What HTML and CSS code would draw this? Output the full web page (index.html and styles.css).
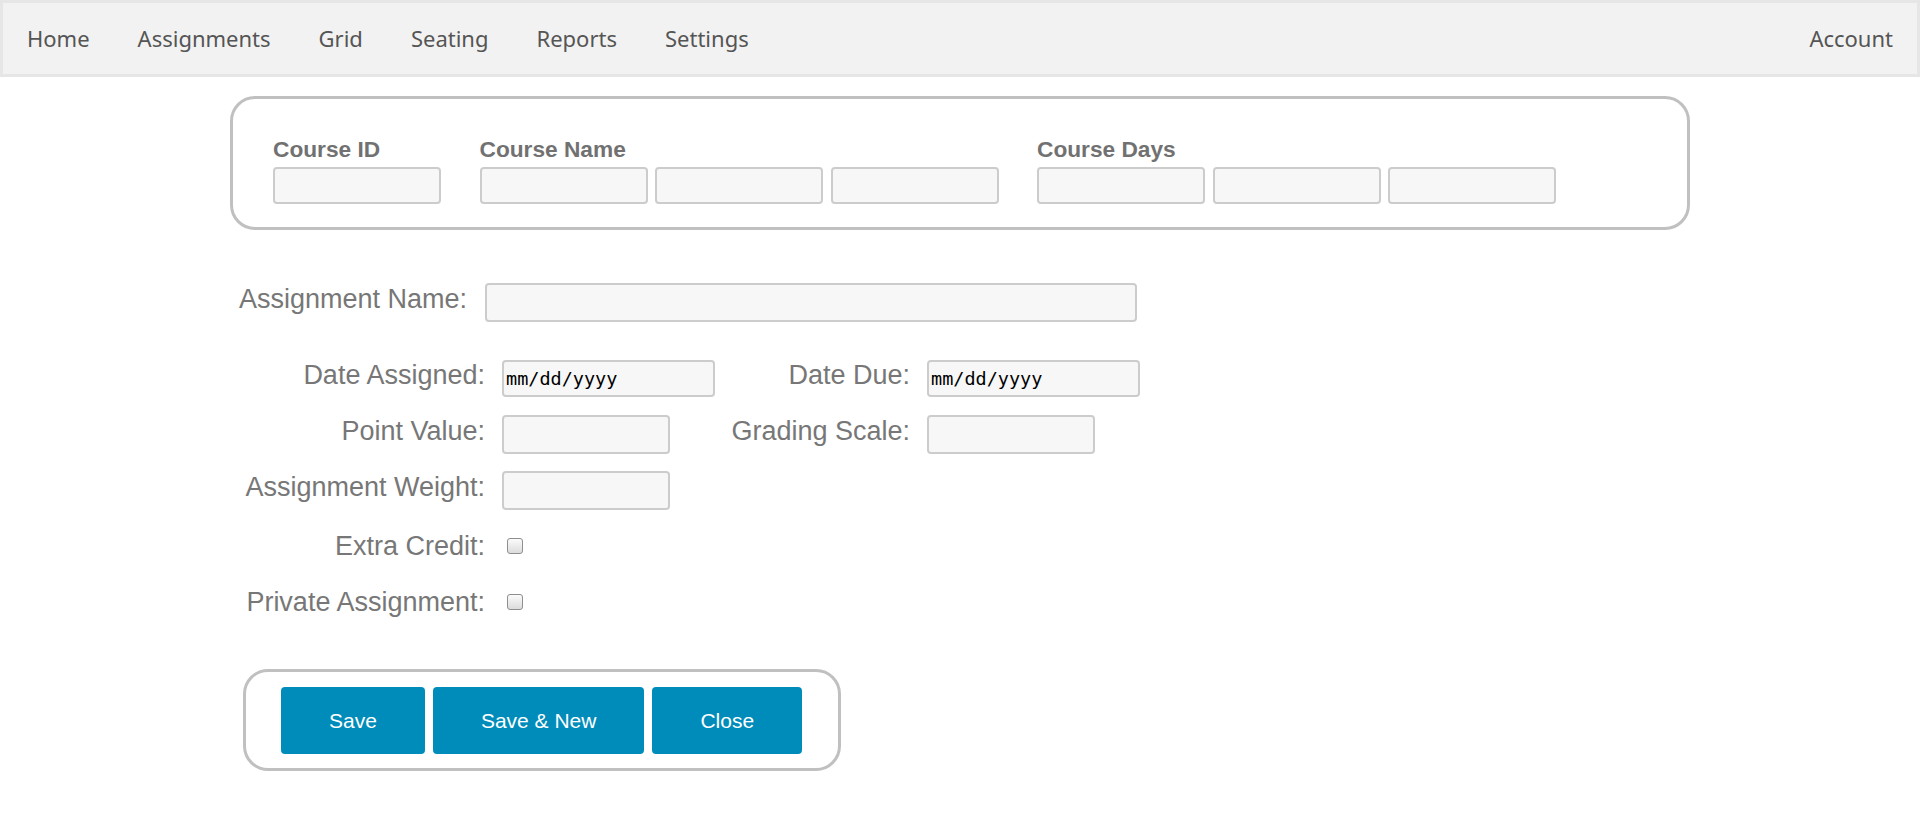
FILE: index.html
```html
<!DOCTYPE html>
<html lang="en">
<head>
<meta charset="utf-8">
<title>Assignment</title>
<link rel="stylesheet" href="styles.css">
</head>
<body>
<nav class="topnav">
  <a class="nav-item" href="#">Home</a>
  <a class="nav-item" href="#">Assignments</a>
  <a class="nav-item" href="#">Grid</a>
  <a class="nav-item" href="#">Seating</a>
  <a class="nav-item" href="#">Reports</a>
  <a class="nav-item" href="#">Settings</a>
  <a class="nav-item nav-account" href="#">Account</a>
</nav>
<main class="page">
  <section class="course-box">
    <div class="course-group">
      <label class="course-label">Course ID</label>
      <div class="course-inputs">
        <input class="field course-field" type="text">
      </div>
    </div>
    <div class="course-group">
      <label class="course-label">Course Name</label>
      <div class="course-inputs">
        <input class="field course-field" type="text">
        <input class="field course-field" type="text">
        <input class="field course-field" type="text">
      </div>
    </div>
    <div class="course-group">
      <label class="course-label">Course Days</label>
      <div class="course-inputs">
        <input class="field course-field" type="text">
        <input class="field course-field" type="text">
        <input class="field course-field" type="text">
      </div>
    </div>
  </section>

  <form class="assignment-form">
    <div class="name-row">
      <label class="form-label name-label">Assignment Name:</label>
      <input class="field name-field" type="text">
    </div>

    <div class="form-grid">
      <label class="form-label grid-label row-date">Date Assigned:</label>
      <input class="field date-field row-date" type="text" placeholder="mm/dd/yyyy">
      <label class="form-label grid-label row-date">Date Due:</label>
      <input class="field date-field row-date" type="text" placeholder="mm/dd/yyyy">

      <label class="form-label grid-label row-point">Point Value:</label>
      <input class="field small-field row-point" type="text">
      <label class="form-label grid-label row-point">Grading Scale:</label>
      <input class="field small-field row-point" type="text">

      <label class="form-label grid-label row-weight">Assignment Weight:</label>
      <input class="field small-field row-weight" type="text">

      <label class="form-label grid-label row-extra">Extra Credit:</label>
      <input class="check row-extra" type="checkbox">

      <label class="form-label grid-label row-private">Private Assignment:</label>
      <input class="check row-private" type="checkbox">
    </div>

    <div class="button-box">
      <button class="btn" type="button">Save</button>
      <button class="btn" type="button">Save &amp; New</button>
      <button class="btn" type="button">Close</button>
    </div>
  </form>
</main>
</body>
</html>
```

FILE: styles.css
```css
html, body {
  margin: 0;
  padding: 0;
  background: #ffffff;
}

body {
  font-family: "Liberation Sans", Arial, sans-serif;
  color: #777777;
}

/* ---------- top navigation ---------- */
.topnav {
  display: flex;
  align-items: center;
  height: 71px;
  background: #f2f2f2;
  border: 3px solid #e6e6e6;
}

.nav-item {
  padding: 0 24px;
  font-family: "Noto Sans", "Open Sans", sans-serif;
  font-size: 22px;
  line-height: 71px;
  color: #555555;
  text-decoration: none;
}

.nav-account {
  margin-left: auto;
}

/* ---------- page ---------- */
.page {
  width: 1460px;
  margin: 19px auto 0;
}

/* ---------- course box ---------- */
.course-box {
  box-sizing: border-box;
  display: flex;
  gap: 38.5px;
  border: 3px solid #c0c0c0;
  border-radius: 25px;
  padding: 38px 40px 23px;
}

.course-group {
  display: flex;
  flex-direction: column;
}

.course-label {
  display: block;
  font-size: 22.7px;
  font-weight: bold;
  line-height: 25px;
  margin-bottom: 5px;
  color: #717171;
}

.course-inputs {
  display: flex;
  gap: 7.5px;
}

/* ---------- fields ---------- */
.field {
  box-sizing: border-box;
  margin: 0;
  border: 2px solid #cccccc;
  border-radius: 4px;
  background: #f7f7f7;
  outline: none;
}

.course-field {
  width: 168px;
  height: 37px;
}

.form-label {
  font-size: 27px;
  line-height: 31px;
  color: #777777;
}

/* ---------- assignment name row ---------- */
.assignment-form {
  margin: 53px 0 0;
}

.name-row {
  display: flex;
  align-items: center;
  margin-left: 9px;
}

.name-label {
  margin-right: 18px;
  padding-bottom: 6px;
}

.name-field {
  width: 652px;
  height: 39px;
}

/* ---------- grid ---------- */
.form-grid {
  display: grid;
  grid-template-columns: 260px 213px 212px auto;
  grid-template-rows: 37px 38px 39px 36px 40px;
  row-gap: 18px;
  align-items: center;
  margin: 38px 0 0 12px;
}

.grid-label {
  box-sizing: border-box;
  padding-right: 17px;
  padding-bottom: 6px;
  text-align: right;
  white-space: nowrap;
}

.row-extra.grid-label,
.row-private.grid-label {
  padding-bottom: 0;
}

.row-weight { grid-row: 3; }
.row-extra { grid-row: 4; }
.row-private { grid-row: 5; }
.row-extra.check, .row-private.check { grid-column: 2; }

.date-field {
  width: 213px;
  height: 37px;
  padding: 0 0 0 2px;
  font-family: "DejaVu Sans Mono", monospace;
  font-size: 18.5px;
  color: #000000;
}

.date-field::placeholder {
  color: #000000;
  opacity: 1;
}

.small-field {
  width: 168px;
  height: 39px;
}

.check {
  appearance: none;
  -webkit-appearance: none;
  box-sizing: border-box;
  width: 16px;
  height: 16px;
  margin: 0 0 0 5px;
  border: 1px solid #8e8e8e;
  border-radius: 3px;
  background: linear-gradient(#fbfbfb, #dcdcdc);
}

/* ---------- buttons ---------- */
.button-box {
  display: inline-flex;
  gap: 8px;
  margin: 47px 0 0 13px;
  padding: 15px 36px 14px 35px;
  border: 3px solid #c0c0c0;
  border-radius: 25px;
}

.btn {
  height: 67px;
  padding: 0 48px;
  border: none;
  border-radius: 4px;
  background: #008cba;
  color: #ffffff;
  font-family: "Liberation Sans", Arial, sans-serif;
  font-size: 21px;
  cursor: pointer;
}
```
